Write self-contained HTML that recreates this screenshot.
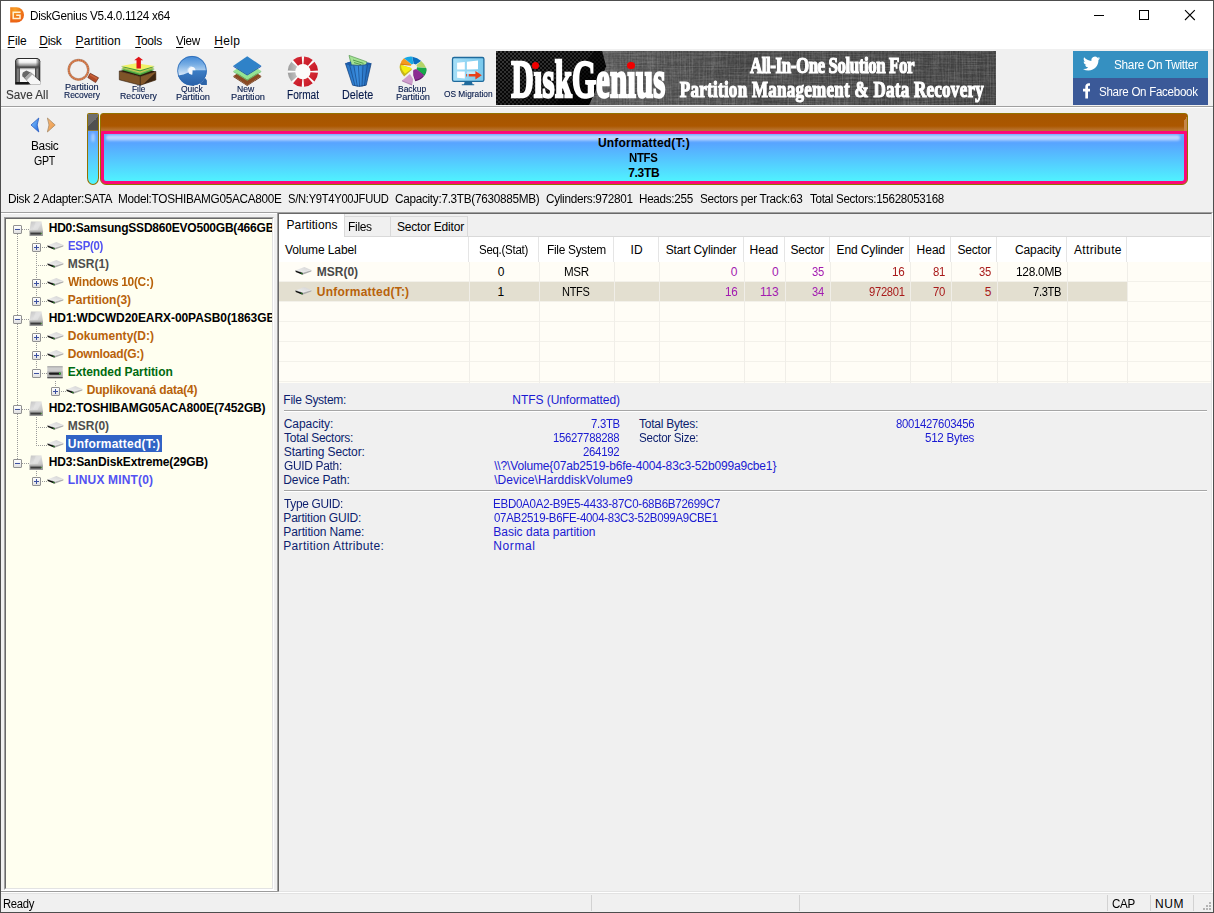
<!DOCTYPE html>
<html lang="en"><head><meta charset="utf-8"><title>DiskGenius V5.4.0.1124 x64</title>
<style>
html,body{margin:0;padding:0}
body{width:1214px;height:913px;overflow:hidden;background:#f0f0f0;font-family:'Liberation Sans', sans-serif;font-size:12px;position:relative}
#win{position:absolute;left:0;top:0;width:1214px;height:913px;overflow:hidden}
#win div,#win span,#win svg{position:absolute;box-sizing:border-box}
#win span{white-space:pre}
.u{text-decoration:underline;text-underline-offset:1px}
#win .nd{position:static;display:inline-block;font-weight:inherit;clip-path:inset(13px -4px 0 -4px)}
#win u{text-decoration:underline;text-underline-offset:1.5px;text-decoration-thickness:1px}

</style></head><body><div id="win">
<div style="left:0px;top:0px;width:1214px;height:913px;background:#f0f0f0;"></div>
<div style="left:1px;top:1px;width:1212px;height:48px;background:#ffffff;"></div>
<svg style="left:9px;top:6px" width="17" height="18" viewBox="9 6 17 18">
<defs><radialGradient id="og" cx=".35" cy=".2" r=".9"><stop offset="0" stop-color="#f8a428"/><stop offset=".5" stop-color="#f07a18"/><stop offset="1" stop-color="#ea5a14"/></radialGradient></defs>
<path d="M10.2 7.2 H16.6 A7.4 7.7 0 0 1 16.6 22.6 H10.2 Z" fill="url(#og)"/>
<path d="M20.6 12.2 H13.2 V18.4 H20 V15.3 H16.2" fill="none" stroke="#fff2d4" stroke-width="1.5"/>
</svg>
<span style="left:29.54px;top:8.00px;font-size:12px;line-height:16px;color:#000;letter-spacing:-0.300px;transform-origin:0 12.0px;transform:scale(0.9764,1);">DiskGenius V5.4.0.1124 x64</span>
<div style="left:1094px;top:15px;width:10px;height:1px;background:#000;"></div>
<div style="left:1139px;top:10px;width:10px;height:10px;border:1px solid #000"></div>
<svg style="left:1184px;top:9px" width="12" height="12" viewBox="0 0 12 12"><path d="M1 1.2 L10.8 11 M10.8 1.2 L1 11" stroke="#000" stroke-width="1.1" fill="none"/></svg>
<span style="left:7.62px;top:33.00px;font-size:12px;line-height:16px;color:#000;letter-spacing:-0.073px;"><u>F</u>ile</span>
<span style="left:39.22px;top:33.00px;font-size:12px;line-height:16px;color:#000;letter-spacing:-0.255px;"><u>D</u>isk</span>
<span style="left:75.62px;top:33.00px;font-size:12px;line-height:16px;color:#000;letter-spacing:0.143px;"><u>P</u>artition</span>
<span style="left:135.23px;top:33.00px;font-size:12px;line-height:16px;color:#000;letter-spacing:-0.278px;"><u>T</u>ools</span>
<span style="left:175.95px;top:33.00px;font-size:12px;line-height:16px;color:#000;letter-spacing:-0.300px;transform-origin:0 12.0px;transform:scale(0.9731,1);"><u>V</u>iew</span>
<span style="left:214.22px;top:33.00px;font-size:12px;line-height:16px;color:#000;letter-spacing:0.370px;"><u>H</u>elp</span>
<div style="left:1px;top:106px;width:1212px;height:1px;background:#a0a0a0;"></div>
<div style="left:1px;top:107px;width:1212px;height:1px;background:#ffffff;"></div>
<div style="left:496px;top:51px;width:500px;height:54px;background:#4b4b4b;overflow:hidden">
<svg style="left:0;top:0" width="500" height="54">
<defs>
<filter id="linH" x="0" y="0" width="100%" height="100%"><feTurbulence type="fractalNoise" baseFrequency="0.03 0.9" numOctaves="2" seed="3"/><feColorMatrix type="matrix" values="0 0 0 0 1  0 0 0 0 1  0 0 0 0 1  0.9 0 0 0 -0.33"/></filter>
<filter id="linV" x="0" y="0" width="100%" height="100%"><feTurbulence type="fractalNoise" baseFrequency="0.9 0.03" numOctaves="2" seed="8"/><feColorMatrix type="matrix" values="0 0 0 0 1  0 0 0 0 1  0 0 0 0 1  0.9 0 0 0 -0.33"/></filter>
<filter id="linD" x="0" y="0" width="100%" height="100%"><feTurbulence type="fractalNoise" baseFrequency="0.5 0.5" numOctaves="1" seed="5"/><feColorMatrix type="matrix" values="0 0 0 0 0  0 0 0 0 0  0 0 0 0 0  0.9 0 0 0 -0.35"/></filter>
<linearGradient id="bnG" x1="0" y1="0" x2="1" y2="0"><stop offset="0.18" stop-color="#585858"/><stop offset="0.5" stop-color="#484848"/><stop offset="1" stop-color="#424242"/></linearGradient>
<pattern id="chk" width="4" height="4" patternUnits="userSpaceOnUse"><rect width="4" height="4" fill="#0a0a0a"/><rect width="2" height="2" fill="#3a3a3a"/><rect x="2" y="2" width="2" height="2" fill="#3a3a3a"/></pattern>
<linearGradient id="chF" x1="0" y1="0" x2="1" y2="1"><stop offset="0" stop-color="#000" stop-opacity="0"/><stop offset="0.55" stop-color="#000" stop-opacity=".35"/><stop offset="1" stop-color="#000" stop-opacity="1"/></linearGradient>
</defs>
<rect width="500" height="54" fill="url(#bnG)"/>
<rect width="500" height="54" filter="url(#linH)" opacity=".36"/>
<rect width="500" height="54" filter="url(#linV)" opacity=".36"/>
<rect width="500" height="54" filter="url(#linD)" opacity=".4"/>
<path d="M0 0 H106 L110 15.5 L93 54 H0 Z" fill="url(#chk)"/>
<path d="M0 0 H106 L110 15.5 L93 54 H0 Z" fill="url(#chF)"/>
<path d="M60 54 L93 54 L110 15.5 L106 0 L98 0 Z" fill="#000" opacity=".55"/>
</svg>
</div>
<span style="left:511.36px;top:69.00px;font-size:31px;line-height:35px;color:#fff;font-weight:700;letter-spacing:0.063px;font-family:'Liberation Serif', serif;transform-origin:0 28.0px;transform:scale(1.0000,1.72);-webkit-text-stroke:1.5px #fff;">D<b class="nd">i</b>skGen<b class="nd">i</b>us</span>
<div style="left:531.5px;top:61.8px;width:7.6px;height:7.6px;border-radius:50%;background:#f00000"></div>
<div style="left:627px;top:61.8px;width:7.6px;height:7.6px;border-radius:50%;background:#f00000"></div>
<span style="left:749.83px;top:57.00px;font-size:17px;line-height:21px;color:#fff;font-weight:700;letter-spacing:-0.425px;font-family:'Liberation Serif', serif;transform-origin:0 16.0px;transform:scale(0.9948,1.3);-webkit-text-stroke:0.95px #fff;">All-In-One Solution For</span>
<span style="left:679.81px;top:81.20px;font-size:17px;line-height:21px;color:#fff;font-weight:700;letter-spacing:0.268px;font-family:'Liberation Serif', serif;transform-origin:0 16.0px;transform:scale(1.0000,1.3);-webkit-text-stroke:0.95px #fff;">Partition Management &amp; Data Recovery</span>
<div style="left:1073px;top:51px;width:135px;height:27px;background:#3590c1;"></div>
<div style="left:1073px;top:78px;width:135px;height:27px;background:#3b5998;"></div>
<svg style="left:1083px;top:55.2px" width="17.2" height="17.2" viewBox="0 0 24 24"><path fill="#fff" d="M23.953 4.57a10 10 0 01-2.825.775 4.958 4.958 0 002.163-2.723c-.951.555-2.005.959-3.127 1.184a4.92 4.92 0 00-8.384 4.482C7.69 8.095 4.067 6.13 1.64 3.162a4.822 4.822 0 00-.666 2.475c0 1.71.87 3.213 2.188 4.096a4.904 4.904 0 01-2.228-.616v.06a4.923 4.923 0 003.946 4.827 4.996 4.996 0 01-2.212.085 4.936 4.936 0 004.604 3.417 9.867 9.867 0 01-6.102 2.105c-.39 0-.779-.023-1.17-.067a13.995 13.995 0 007.557 2.209c9.053 0 13.998-7.496 13.998-13.985 0-.21 0-.42-.015-.63A9.935 9.935 0 0024 4.59z"/></svg>
<svg style="left:1082.8px;top:83.2px" width="7.7" height="15.5" viewBox="0 0 10 20"><path fill="#fff" d="M6.5 20 V11 H9.5 L10 7.5 H6.5 V5.3 C6.5 4.3 6.8 3.6 8.3 3.6 H10 V0.4 C9.7 0.4 8.6 0.3 7.4 0.3 4.8 0.3 3 1.9 3 4.8 V7.5 H0 V11 H3 V20 Z"/></svg>
<span style="left:1113.96px;top:57.00px;font-size:12px;line-height:16px;color:#fff;letter-spacing:-0.300px;transform-origin:0 12.0px;transform:scale(0.9848,1);">Share On Twitter</span>
<span style="left:1098.97px;top:84.00px;font-size:12px;line-height:16px;color:#fff;letter-spacing:-0.300px;transform-origin:0 12.0px;transform:scale(0.9650,1);">Share On Facebook</span>
<svg style="left:0;top:50px" width="496" height="56" viewBox="0 50 496 56">
<defs>
<linearGradient id="svA" x1="0" y1="0" x2="1" y2="0"><stop offset="0" stop-color="#3a3a3a"/><stop offset=".5" stop-color="#8e8e8e"/><stop offset="1" stop-color="#3c3c3c"/></linearGradient>
<linearGradient id="svS" x1="0" y1="0" x2="1" y2="0"><stop offset="0" stop-color="#333" stop-opacity=".75"/><stop offset=".16" stop-color="#333" stop-opacity="0"/><stop offset=".84" stop-color="#333" stop-opacity="0"/><stop offset="1" stop-color="#333" stop-opacity=".75"/></linearGradient><linearGradient id="svT" x1="0" y1="0" x2="0" y2="1"><stop offset="0" stop-color="#ffffff"/><stop offset=".4" stop-color="#f2f2f2"/><stop offset=".8" stop-color="#8e8e8e"/><stop offset="1" stop-color="#5a5a5a"/></linearGradient>
<linearGradient id="fmR" x1="0" y1="0" x2="1" y2="1"><stop offset="0" stop-color="#d8303a"/><stop offset="1" stop-color="#c41422"/></linearGradient>
<linearGradient id="fmG" x1="0" y1="0" x2="1" y2="0"><stop offset="0" stop-color="#9c9c9c"/><stop offset="1" stop-color="#c4c4c4"/></linearGradient>
<linearGradient id="qpA" x1="0" y1="0" x2="0" y2="1"><stop offset="0" stop-color="#4a94dc"/><stop offset=".5" stop-color="#b4d8f4"/><stop offset=".5" stop-color="#3a7cc4"/><stop offset="1" stop-color="#2a62a8"/></linearGradient>
<linearGradient id="qpL" x1="0" y1="0" x2="0" y2="1"><stop offset="0.03" stop-color="#4088d6"/><stop offset=".3" stop-color="#78aee4"/><stop offset=".62" stop-color="#d4e6f8"/><stop offset="1" stop-color="#d4e6f8"/></linearGradient>
<linearGradient id="qpD" x1="0" y1="0" x2="0" y2="1"><stop offset="0" stop-color="#3c7ec6"/><stop offset="1" stop-color="#285ea4"/></linearGradient>
<linearGradient id="binG" x1="0" y1="0" x2="1" y2="0"><stop offset="0" stop-color="#2470c0"/><stop offset=".5" stop-color="#3a8ee0"/><stop offset="1" stop-color="#1e62b0"/></linearGradient>
<linearGradient id="monG" x1="0" y1="0" x2="1" y2="0"><stop offset="0" stop-color="#a8e0f8"/><stop offset="1" stop-color="#78c8ec"/></linearGradient>
<clipPath id="qpC"><circle cx="192" cy="70.75" r="14.8"/></clipPath>
</defs>
<!-- Save All -->
<path d="M18 57.9 H37.4 Q40.3 58.7 40.3 61.2 V84.6 H15.1 V61.2 Q15.1 58.7 18 57.9Z" fill="#2c2c2c"/>
<path d="M18 58.9 H37.4 Q39.4 59.5 39.4 61.2 V67.4 H16 V61.2 Q16 59.5 18 58.9Z" fill="url(#svT)"/>
<path d="M18 58.9 H37.4 Q39.4 59.5 39.4 61.2 V67.4 H16 V61.2 Q16 59.5 18 58.9Z" fill="url(#svS)"/>
<rect x="16" y="67.4" width="3.9" height="15.6" fill="url(#svA)"/>
<rect x="35" y="67.4" width="4.4" height="14.6" fill="url(#svA)"/>
<rect x="16.6" y="66.4" width="22.2" height="2.2" fill="#4c4c4c" opacity=".8"/>
<rect x="19.9" y="68.6" width="15.1" height="13.4" fill="#f7f7f7"/>
<rect x="19.9" y="68.6" width="15.1" height="1.1" fill="#d6d6d6"/>
<rect x="15.6" y="82" width="13" height="2.3" fill="#161616"/>
<path d="M22.2 74.8 L22.8 72.6 L26.4 70.4 L30.6 72.4 L24.8 78.2 L22.4 76.6 Z" fill="#6a6a6a"/>
<path d="M24.8 78.2 L30.6 72.4 L32.6 74.4 L27 80.2 Z" fill="#aeaeae"/>
<path d="M27 80.2 L32.6 74.4 L40.3 81.4 V84.6 H30.6 Z" fill="#f6f6f6"/>
<path d="M30.6 72.4 L40.3 81.2 M24.8 78.2 L30.2 84.6" stroke="#2a2a2a" stroke-width=".6" stroke-dasharray="1.2 .5" fill="none"/>
<!-- Partition Recovery magnifier -->
<circle cx="78.5" cy="69.8" r="9.75" fill="none" stroke="#6a3a20" stroke-width="2.5" opacity=".45"/>
<circle cx="78.5" cy="69.8" r="9.75" fill="none" stroke="#dc8050" stroke-width="1.7"/>
<circle cx="78.5" cy="69.8" r="9.75" fill="none" stroke="#a4562e" stroke-width="1.7" stroke-dasharray=".8 1.4" opacity=".6"/>
<path d="M90.2 73.2 L98.6 77.8 L95.6 82.6 L87.8 77.6 Z" fill="#b04a26" stroke="#5a1e0c" stroke-width=".6" stroke-linejoin="round"/>
<path d="M90.4 74 L97.6 78 L96.8 79.4 L89.6 75.2 Z" fill="#c8623a"/>
<!-- File Recovery -->
<path d="M119.3 71 L140.4 76.4 L140.4 85.2 L119.3 79.8 Z" fill="#7e5428" stroke="#2e1a08" stroke-width=".6" stroke-linejoin="round"/>
<path d="M140.4 76.4 L155.8 71.4 L155.8 80 L140.4 85.2 Z" fill="#84582a" stroke="#2e1a08" stroke-width=".6" stroke-linejoin="round"/>
<path d="M143.5 84 L155.6 72.6 L155.6 79.8 Z" fill="#3c2612"/>
<path d="M119.3 71 L135 67 L155.8 71.4 L140.4 76.4 Z" fill="#2e1a08"/>
<path d="M121 69.8 L136 66.6 L154.6 69.8 L140 75.2 Z" fill="#44a23e"/>
<path d="M121 68.6 L136 65.6 L154.6 68.6 L140 73.8 Z" fill="#8cc458"/>
<path d="M121.6 67.6 L136 64.8 L154 67.6 L140 72.4 Z" fill="#d6c850"/>
<path d="M121 66.8 L136 64 L154.6 66.8 L140 71.4 Z" fill="#3f9a3c"/>
<path d="M121 66 L136 63.2 L154.6 66 L140 70.2 Z" fill="#f2f268"/>
<path d="M136.5 68.4 V60.2 H134.2 L138.7 56.8 L143.2 60.2 H140.9 V68.4 Z" fill="#e01418"/>
<!-- Quick Partition -->
<path d="M199 80 L204.8 77.6 L206.9 80.6 L206.9 85 L201.6 85 L198 82 Z" fill="#2c64a8"/>
<g clip-path="url(#qpC)">
<rect x="176" y="55" width="33" height="32" fill="url(#qpL)"/>
<path d="M176 76 Q184 74.6 188.4 72.4 L192.4 72.4 L192.4 70.3 L208 70.3 L209 87 L176 87 Z" fill="url(#qpD)"/>
</g>
<circle cx="192" cy="70.75" r="14.4" fill="none" stroke="#2a66b2" stroke-width=".9" opacity=".85"/>
<path d="M191.7 66.8 A3.9 3.9 0 1 0 192.4 74.6 L192.4 70.3 L195.5 70.3 A3.9 3.9 0 0 0 191.7 66.8Z" fill="#f6f9fc"/>
<path d="M191.7 66.4 A4.3 4.3 0 0 0 187.6 72" fill="none" stroke="#cfe2f6" stroke-width=".8" opacity=".8"/>
<!-- New Partition -->
<path d="M233.4 76 L247.2 67 L261.2 76 L247.2 85.2 Z" fill="#8a4a22"/>
<path d="M233.4 76 L247.2 85.2 L261.2 76 L261.2 77 L247.2 86 L233.4 77Z" fill="#6c3410"/>
<path d="M233.4 71 L247.2 62 L261.2 71 L247.2 79.8 Z" fill="#94e494"/>
<path d="M233.4 71 L247.2 79.8 L261.2 71 L261.2 72 L247.2 80.8 L233.4 72Z" fill="#6cc070"/>
<path d="M233.4 65.8 L247.2 56.2 L261.2 65.8 L247.2 74.4 Z" fill="#2f82c8"/>
<path d="M233.4 65.8 L247.2 74.4 L261.2 65.8 L261.2 66.8 L247.2 75.4 L233.4 66.8Z" fill="#1a56b0"/>
<!-- Format -->
<circle cx="302.9" cy="71.6" r="14.6" fill="#fbfbfb"/>
<path d="M318.05 72.79 A15.2 15.2 0 0 1 314.46 81.47 L308.68 76.54 A7.6 7.6 0 0 0 310.48 72.20 Z" fill="url(#fmR)"/><path d="M312.77 83.16 A15.2 15.2 0 0 1 304.09 86.75 L303.50 79.18 A7.6 7.6 0 0 0 307.84 77.38 Z" fill="url(#fmR)"/><path d="M301.71 86.75 A15.2 15.2 0 0 1 293.03 83.16 L297.96 77.38 A7.6 7.6 0 0 0 302.30 79.18 Z" fill="url(#fmR)"/><path d="M291.34 81.47 A15.2 15.2 0 0 1 287.75 72.79 L295.32 72.20 A7.6 7.6 0 0 0 297.12 76.54 Z" fill="url(#fmG)"/><path d="M287.75 70.41 A15.2 15.2 0 0 1 291.34 61.73 L297.12 66.66 A7.6 7.6 0 0 0 295.32 71.00 Z" fill="url(#fmG)"/><path d="M293.03 60.04 A15.2 15.2 0 0 1 301.71 56.45 L302.30 64.02 A7.6 7.6 0 0 0 297.96 65.82 Z" fill="url(#fmR)"/><path d="M304.09 56.45 A15.2 15.2 0 0 1 312.77 60.04 L307.84 65.82 A7.6 7.6 0 0 0 303.50 64.02 Z" fill="url(#fmR)"/><path d="M314.46 61.73 A15.2 15.2 0 0 1 318.05 70.41 L310.48 71.00 A7.6 7.6 0 0 0 308.68 66.66 Z" fill="url(#fmR)"/>
<!-- Delete -->
<path d="M349 55.4 L366.8 61.8 L366.2 66.4 L351.6 66 Z" fill="#a4e294" stroke="#3e8a3a" stroke-width=".6"/>
<path d="M353 60 L363.5 63.4 M354 62.6 L361 64.6" stroke="#3e8a3a" stroke-width=".8" fill="none"/>
<path d="M345.4 63.4 Q358 67.4 371.2 63.4 L366.2 85.2 Q359.4 87.6 352.6 85.2 Z" fill="url(#binG)" stroke="#123e78" stroke-width=".7"/>
<path d="M349.6 65 L355 86 M353.8 65.6 L357.4 86.6 M358.4 66 L359.6 86.8 M363 65.6 L362 86.4 M367.4 64.8 L364.4 86" stroke="#123e78" stroke-width=".7" fill="none" opacity=".85"/>
<path d="M345.4 63.4 Q347 61.8 351 61.4 L351.6 66 Q348 65 345.4 63.4Z M366.6 62.2 Q370 62.4 371.2 63.4 Q369 64.6 366.2 65.4Z" fill="#1c5aa8"/>
<!-- Backup Partition -->

<path d="M400 64.6 Q398.2 70 404.1 76.6 L411.6 70 L411.6 68.2 Z" fill="#c4b41c"/>
<path d="M413.4 70.6 L424.1 76 Q420.5 80.4 415.3 81.2 Q412.6 76 413.4 70.6 Z" fill="#5e1a66"/>
<path d="M416.6 69 L426.4 68.6 Q427 72.6 424.1 76 Z" fill="#0e7a32"/>
<path d="M411.5 65.6 L400.2 64.8 Q401 60.5 404 58.3 L411.6 64.4 Z" fill="#f59a1e"/>
<path d="M411.5 65.6 L400.2 64.8 L400.6 63.4 L411 64.9Z" fill="#d87e10"/>
<path d="M411.8 64.4 L404 58.3 Q408 56.2 412.4 56.7 L413.3 63.8 Z" fill="#18a8e4"/>
<path d="M413.6 63.8 L412.4 56.7 Q417.5 57.4 421.2 61 L415.8 64.6 Z" fill="#0a6ec0"/>
<path d="M416.3 65.2 L421.2 61 Q424.8 64 426.2 68 L417 66.8 Z" fill="#b4d468"/>
<path d="M417 67.2 L426.2 68 Q426.8 71.8 424.1 75 L416.6 69 Z" fill="#18a84a"/>
<path d="M413.4 70 L416.2 68.9 L424.1 75 Q420.5 79.2 415.3 79.8 Q412.8 75 413.4 70 Z" fill="#8c2c92"/>
<path d="M411.6 68 L401.2 65 Q400.4 68.8 405 73.8 L411.5 69 Z" fill="#f6ee10"/>
<path d="M402.2 81.4 L412 85.5 L412.8 79 L402.2 80 Z" fill="#b084b0"/>
<path d="M409.9 73.9 L402.2 80.6 L411.9 84.3 L412.8 78.4 Z" fill="#cf9ccc"/>
<ellipse cx="413.7" cy="66.7" rx="2.9" ry="2.2" fill="#f4f2e6"/>

<!-- OS Migration -->
<rect x="452.5" y="57.5" width="31.4" height="23.9" rx="1.6" fill="url(#monG)" stroke="#1f6a9c" stroke-width="1.3"/>
<path d="M464.6 82 H472 L472.6 84.2 H474.2 V85.3 H461.8 V84.2 H464 Z" fill="#1f6a9c"/>
<path d="M457.1 62.8 L464.8 62 V69.4 L457.1 69.6 Z M466.9 61.8 L478 60.6 V69.2 L466.9 69.4 Z M457.1 71.4 L464.8 71.4 V78.6 L457.1 77.8 Z" fill="#ffffff"/>
<path d="M466.9 71.4 L478 71.4 V74 L466.9 74 Z" fill="#ffffff" opacity=".5"/>
<path d="M468.8 73.9 H475.4 V71 L481.8 75.2 L475.4 79.4 V76.5 H468.8 Z M466 73.9 H466.8 V76.5 H466 Z" fill="#e8401a"/>
</svg>
<span style="left:6.27px;top:86.90px;font-size:12px;line-height:16px;color:#383838;transform-origin:0 12.0px;transform:scale(0.9748,1);-webkit-text-stroke:0.12px #383838;">Save All</span>
<span style="left:65.15px;top:81.30px;font-size:8.8px;line-height:12.8px;color:#071a4a;transform-origin:0 9.4px;transform:scale(1.0427,1);-webkit-text-stroke:0.12px #071a4a;">Partition</span>
<span style="left:64.40px;top:89.40px;font-size:8.8px;line-height:12.8px;color:#071a4a;transform-origin:0 9.4px;transform:scale(0.9666,1);-webkit-text-stroke:0.12px #071a4a;">Recovery</span>
<span style="left:131.92px;top:83.40px;font-size:8.8px;line-height:12.8px;color:#071a4a;transform-origin:0 9.4px;transform:scale(0.9417,1);-webkit-text-stroke:0.12px #071a4a;">File</span>
<span style="left:119.98px;top:89.50px;font-size:8.8px;line-height:12.8px;color:#071a4a;transform-origin:0 9.4px;transform:scale(0.9941,1);-webkit-text-stroke:0.12px #071a4a;">Recovery</span>
<span style="left:181.20px;top:83.20px;font-size:8.8px;line-height:12.8px;color:#071a4a;transform-origin:0 9.4px;transform:scale(0.9646,1);-webkit-text-stroke:0.12px #071a4a;">Quick</span>
<span style="left:175.84px;top:91.10px;font-size:8.8px;line-height:12.8px;color:#071a4a;transform-origin:0 9.4px;transform:scale(1.0524,1);-webkit-text-stroke:0.12px #071a4a;">Partition</span>
<span style="left:237.00px;top:83.20px;font-size:8.8px;line-height:12.8px;color:#071a4a;transform-origin:0 9.4px;transform:scale(0.9765,1);-webkit-text-stroke:0.12px #071a4a;">New</span>
<span style="left:231.04px;top:91.10px;font-size:8.8px;line-height:12.8px;color:#071a4a;transform-origin:0 9.4px;transform:scale(1.0524,1);-webkit-text-stroke:0.12px #071a4a;">Partition</span>
<span style="left:286.97px;top:86.70px;font-size:12px;line-height:16px;color:#071a4a;transform-origin:0 12.0px;transform:scale(0.8421,1);-webkit-text-stroke:0.12px #071a4a;">Format</span>
<span style="left:342.21px;top:86.70px;font-size:12px;line-height:16px;color:#071a4a;transform-origin:0 12.0px;transform:scale(0.9014,1);-webkit-text-stroke:0.12px #071a4a;">Delete</span>
<span style="left:398.30px;top:83.20px;font-size:8.8px;line-height:12.8px;color:#071a4a;transform-origin:0 9.4px;transform:scale(0.9628,1);-webkit-text-stroke:0.12px #071a4a;">Backup</span>
<span style="left:395.84px;top:91.10px;font-size:8.8px;line-height:12.8px;color:#071a4a;transform-origin:0 9.4px;transform:scale(1.0524,1);-webkit-text-stroke:0.12px #071a4a;">Partition</span>
<span style="left:444.21px;top:87.80px;font-size:8.8px;line-height:12.8px;color:#071a4a;transform-origin:0 9.4px;transform:scale(0.9475,1);-webkit-text-stroke:0.12px #071a4a;">OS Migration</span>
<svg style="left:28px;top:115px" width="30" height="20" viewBox="28 115 30 20">
<defs><linearGradient id="arB" x1="0" y1="0" x2="1" y2="1"><stop offset="0" stop-color="#8cd0ff"/><stop offset="1" stop-color="#1f66e0"/></linearGradient>
<linearGradient id="arO" x1="0" y1="0" x2="1" y2="1"><stop offset="0" stop-color="#f8b878"/><stop offset="1" stop-color="#e89848"/></linearGradient></defs>
<path d="M31 125 L38.8 118 L37.2 125 L38.8 132 Z" fill="url(#arB)" stroke="#2a5cc0" stroke-width=".8" stroke-linejoin="round"/>
<path d="M55.2 125 L47.4 118 L49 125 L47.4 132 Z" fill="url(#arO)" stroke="#a88c68" stroke-width=".8" stroke-linejoin="round"/>
</svg>
<span style="left:30.53px;top:138.00px;font-size:12px;line-height:16px;color:#000;letter-spacing:-0.300px;transform-origin:0 12.0px;transform:scale(0.9872,1);">Basic</span>
<span style="left:33.97px;top:152.50px;font-size:12px;line-height:16px;color:#000;letter-spacing:-0.300px;transform-origin:0 12.0px;transform:scale(0.8840,1);">GPT</span>
<div style="left:87px;top:113px;width:12px;height:72px;border:1px solid #927200;border-radius:2px 2px 6px 6px / 2px 2px 7px 7px;background:linear-gradient(#6a9cff 0,#62a4ff 30%,#50f4ff 100%);overflow:hidden">
<div style="left:0;top:0;width:10px;height:17px;background:linear-gradient(135deg,#6e6e6e 0 50%,#505050 50% 100%);border-bottom:1px solid #8a7a40"></div>
<div style="left:3px;top:19px;width:4px;height:9px;border-radius:50%;background:rgba(255,255,255,.4);filter:blur(1px)"></div>
</div>
<div style="left:100px;top:113px;width:1088px;height:72px;border:1px solid #927200;border-radius:3px 3px 6px 6px;background:linear-gradient(#a65600 0,#ab5700 12px,#b8722e 16px,#b8722e 100%)"></div>
<div style="left:1184px;top:114px;width:3px;height:17px;background:linear-gradient(135deg,#a85800 0 30%,#c4864a 30% 100%)"></div>
<div style="left:101px;top:131px;width:1086px;height:53px;border:3px solid #fb0878;border-radius:1px 1px 5px 5px;background:linear-gradient(#6aa6ff 0,#58a4ff 9px,#50f2ff 100%)">
<div style="left:2px;top:1px;width:1074px;height:6px;border-radius:3px;background:linear-gradient(rgba(255,255,255,.45),rgba(255,255,255,.62),rgba(255,255,255,.25));filter:blur(.8px)"></div>
</div>
<span style="left:597.98px;top:134.70px;font-size:12px;line-height:16px;color:#000;font-weight:700;letter-spacing:0.178px;">Unformatted(T:)</span>
<span style="left:628.74px;top:149.70px;font-size:12px;line-height:16px;color:#000;font-weight:700;letter-spacing:-0.300px;transform-origin:0 12.0px;transform:scale(0.9465,1);">NTFS</span>
<span style="left:628.18px;top:164.90px;font-size:12px;line-height:16px;color:#000;font-weight:700;letter-spacing:-0.279px;">7.3TB</span>
<span style="left:7.63px;top:190.50px;font-size:12px;line-height:16px;color:#000;letter-spacing:-0.300px;transform-origin:0 12.0px;transform:scale(0.9896,1);">Disk 2 Adapter:SATA</span>
<span style="left:118.33px;top:190.50px;font-size:12px;line-height:16px;color:#000;letter-spacing:-0.300px;transform-origin:0 12.0px;transform:scale(0.9815,1);">Model:TOSHIBAMG05ACA800E</span>
<span style="left:287.79px;top:190.50px;font-size:12px;line-height:16px;color:#000;letter-spacing:-0.300px;transform-origin:0 12.0px;transform:scale(0.9320,1);">S/N:Y9T4Y00JFUUD</span>
<span style="left:395.20px;top:190.50px;font-size:12px;line-height:16px;color:#000;letter-spacing:-0.300px;transform-origin:0 12.0px;transform:scale(0.9802,1);">Capacity:7.3TB(7630885MB)</span>
<span style="left:546.40px;top:190.50px;font-size:12px;line-height:16px;color:#000;letter-spacing:-0.300px;transform-origin:0 12.0px;transform:scale(0.9806,1);">Cylinders:972801</span>
<span style="left:639.34px;top:190.50px;font-size:12px;line-height:16px;color:#000;letter-spacing:-0.300px;transform-origin:0 12.0px;transform:scale(0.9731,1);">Heads:255</span>
<span style="left:700.07px;top:190.50px;font-size:12px;line-height:16px;color:#000;letter-spacing:-0.300px;transform-origin:0 12.0px;transform:scale(0.9783,1);">Sectors per Track:63</span>
<span style="left:809.94px;top:190.50px;font-size:12px;line-height:16px;color:#000;letter-spacing:-0.300px;transform-origin:0 12.0px;transform:scale(0.9666,1);">Total Sectors:15628053168</span>
<div style="left:1px;top:212px;width:1212px;height:1px;background:#a0a0a0;"></div>
<div style="left:1px;top:213px;width:1212px;height:1px;background:#ffffff;"></div>
<div style="left:4px;top:217px;width:270px;height:673px;background:#fffff0;border-top:1px solid #a0a0a0;border-left:1px solid #a0a0a0;border-right:1px solid #fff;border-bottom:1px solid #fff"></div>
<div style="left:5px;top:218px;width:268px;height:671px;background:#fffff0;border-top:1px solid #696969;border-left:1px solid #696969;border-right:1px solid #e3e3e3;border-bottom:1px solid #e3e3e3"></div>
<svg width="0" height="0" style="left:0;top:0"><defs>
<linearGradient id="hdTop" x1="0" y1="0" x2="1" y2="1"><stop offset="0" stop-color="#c4c4c4"/><stop offset="0.5" stop-color="#dedede"/><stop offset="1" stop-color="#c0c0c0"/></linearGradient>
<linearGradient id="ptTop" x1="0" y1="1" x2="1" y2="0"><stop offset="0" stop-color="#f2f2f2"/><stop offset="0.5" stop-color="#e2e2e2"/><stop offset="1" stop-color="#d2d2d2"/></linearGradient>
<symbol id="icHD" viewBox="0 0 15 16"><path d="M2 0.5 H13 L14.5 10 H0.5 Z" fill="url(#hdTop)"/><path d="M7 1 L13 1 L9 9 L4 9 Z" fill="#e6e6e6" opacity=".6"/><rect x="0.5" y="10" width="14" height="5.5" fill="#9a9a9a"/><rect x="0.5" y="10" width="14" height="1" fill="#b8b8b8"/><rect x="1.5" y="12" width="11" height="2" fill="#3c3c3c"/><rect x="12.3" y="12.3" width="1.2" height="1.2" fill="#4a9a3a"/></symbol>
<symbol id="icPT" viewBox="0 0 17 9"><path d="M0.8 3.2 L9.4 0 L16.3 3 L7.7 5.7 Z" fill="url(#ptTop)"/><path d="M7.7 5.6 L16.3 3 L16.3 4.6 L7.5 7.7 Z" fill="#adadad"/><path d="M0.5 3.3 L7.7 5.6 L7.5 7.7 L0.7 4.9 Z" fill="#0c0c0c"/><path d="M5.8 5.6 L7.4 6.1 L7.3 7.3 L5.8 6.7 Z" fill="#1c7a1c"/><path d="M0.6 3.3 L7.7 5.5 L16.3 2.9" fill="none" stroke="#fbfbfb" stroke-width=".5"/></symbol>
<symbol id="icEX" viewBox="0 0 16 13"><rect x="0.3" y="0.3" width="15.4" height="12" rx=".8" fill="#cdcdcd"/><rect x="0.3" y="0.3" width="15.4" height="1" fill="#a2a2a2"/><rect x="0.3" y="5.4" width="15.4" height="6" fill="#b0b0b0"/><rect x="1.8" y="6.4" width="12.2" height="2.3" rx="1.1" fill="#1c1c1c"/><rect x="12" y="6.6" width="1.7" height="1.9" rx=".6" fill="#34c434"/><rect x="0.3" y="11" width="15.4" height="1.3" fill="#555"/></symbol>
</defs></svg>
<div style="left:6px;top:219px;width:266px;height:669px;overflow:hidden">
<div style="left:11px;top:15px;width:1px;height:227px;background:repeating-linear-gradient(#9a9a9a 0 1px,transparent 1px 2px)"></div>
<div style="left:30px;top:18px;width:1px;height:65px;background:repeating-linear-gradient(#9a9a9a 0 1px,transparent 1px 2px)"></div>
<div style="left:30px;top:108px;width:1px;height:47px;background:repeating-linear-gradient(#9a9a9a 0 1px,transparent 1px 2px)"></div>
<div style="left:30px;top:198px;width:1px;height:29px;background:repeating-linear-gradient(#9a9a9a 0 1px,transparent 1px 2px)"></div>
<div style="left:30px;top:252px;width:1px;height:11px;background:repeating-linear-gradient(#9a9a9a 0 1px,transparent 1px 2px)"></div>
<div style="left:49px;top:162px;width:1px;height:11px;background:repeating-linear-gradient(#9a9a9a 0 1px,transparent 1px 2px)"></div>
<div style="left:16px;top:10px;width:7px;height:1px;background:repeating-linear-gradient(90deg,#9a9a9a 0 1px,transparent 1px 2px)"></div>
<div style="left:7px;top:6px;width:9px;height:9px;border:1px solid #919191;background:linear-gradient(#fff,#e0e0e0);border-radius:1px"></div>
<div style="left:9px;top:10px;width:5px;height:1px;background:#3c50a0;"></div>
<svg style="left:23px;top:2px" width="14.4" height="15.6"><use href="#icHD"/></svg>
<span style="left:42.70px;top:1.00px;font-size:12px;line-height:16px;color:#000;font-weight:700;letter-spacing:-0.216px;">HD0:SamsungSSD860EVO500GB(466GB)</span>
<div style="left:30px;top:28px;width:11px;height:1px;background:repeating-linear-gradient(90deg,#9a9a9a 0 1px,transparent 1px 2px)"></div>
<div style="left:26px;top:24px;width:9px;height:9px;border:1px solid #919191;background:linear-gradient(#fff,#e0e0e0);border-radius:1px"></div>
<div style="left:28px;top:28px;width:5px;height:1px;background:#3c50a0;"></div>
<div style="left:30px;top:26px;width:1px;height:5px;background:#3c50a0;"></div>
<svg style="left:40.5px;top:23px" width="17" height="9"><use href="#icPT"/></svg>
<span style="left:61.74px;top:19.00px;font-size:12px;line-height:16px;color:#5252f2;font-weight:700;letter-spacing:-0.300px;transform-origin:0 12.0px;transform:scale(0.9503,1);">ESP(0)</span>
<div style="left:30px;top:46px;width:11px;height:1px;background:repeating-linear-gradient(90deg,#9a9a9a 0 1px,transparent 1px 2px)"></div>
<svg style="left:40.5px;top:41px" width="17" height="9"><use href="#icPT"/></svg>
<span style="left:61.70px;top:37.00px;font-size:12px;line-height:16px;color:#4e4e4e;font-weight:700;letter-spacing:0.014px;">MSR(1)</span>
<div style="left:30px;top:64px;width:11px;height:1px;background:repeating-linear-gradient(90deg,#9a9a9a 0 1px,transparent 1px 2px)"></div>
<div style="left:26px;top:60px;width:9px;height:9px;border:1px solid #919191;background:linear-gradient(#fff,#e0e0e0);border-radius:1px"></div>
<div style="left:28px;top:64px;width:5px;height:1px;background:#3c50a0;"></div>
<div style="left:30px;top:62px;width:1px;height:5px;background:#3c50a0;"></div>
<svg style="left:40.5px;top:59px" width="17" height="9"><use href="#icPT"/></svg>
<span style="left:62.49px;top:55.00px;font-size:12px;line-height:16px;color:#b8620a;font-weight:700;letter-spacing:-0.300px;transform-origin:0 12.0px;transform:scale(0.9956,1);">Windows 10(C:)</span>
<div style="left:30px;top:82px;width:11px;height:1px;background:repeating-linear-gradient(90deg,#9a9a9a 0 1px,transparent 1px 2px)"></div>
<div style="left:26px;top:78px;width:9px;height:9px;border:1px solid #919191;background:linear-gradient(#fff,#e0e0e0);border-radius:1px"></div>
<div style="left:28px;top:82px;width:5px;height:1px;background:#3c50a0;"></div>
<div style="left:30px;top:80px;width:1px;height:5px;background:#3c50a0;"></div>
<svg style="left:40.5px;top:77px" width="17" height="9"><use href="#icPT"/></svg>
<span style="left:61.70px;top:73.00px;font-size:12px;line-height:16px;color:#b8620a;font-weight:700;letter-spacing:0.006px;">Partition(3)</span>
<div style="left:16px;top:100px;width:7px;height:1px;background:repeating-linear-gradient(90deg,#9a9a9a 0 1px,transparent 1px 2px)"></div>
<div style="left:7px;top:96px;width:9px;height:9px;border:1px solid #919191;background:linear-gradient(#fff,#e0e0e0);border-radius:1px"></div>
<div style="left:9px;top:100px;width:5px;height:1px;background:#3c50a0;"></div>
<svg style="left:23px;top:92px" width="14.4" height="15.6"><use href="#icHD"/></svg>
<span style="left:42.70px;top:91.00px;font-size:12px;line-height:16px;color:#000;font-weight:700;letter-spacing:-0.070px;">HD1:WDCWD20EARX-00PASB0(1863GB)</span>
<div style="left:30px;top:118px;width:11px;height:1px;background:repeating-linear-gradient(90deg,#9a9a9a 0 1px,transparent 1px 2px)"></div>
<div style="left:26px;top:114px;width:9px;height:9px;border:1px solid #919191;background:linear-gradient(#fff,#e0e0e0);border-radius:1px"></div>
<div style="left:28px;top:118px;width:5px;height:1px;background:#3c50a0;"></div>
<div style="left:30px;top:116px;width:1px;height:5px;background:#3c50a0;"></div>
<svg style="left:40.5px;top:113px" width="17" height="9"><use href="#icPT"/></svg>
<span style="left:61.70px;top:109.00px;font-size:12px;line-height:16px;color:#b8620a;font-weight:700;letter-spacing:0.034px;">Dokumenty(D:)</span>
<div style="left:30px;top:136px;width:11px;height:1px;background:repeating-linear-gradient(90deg,#9a9a9a 0 1px,transparent 1px 2px)"></div>
<div style="left:26px;top:132px;width:9px;height:9px;border:1px solid #919191;background:linear-gradient(#fff,#e0e0e0);border-radius:1px"></div>
<div style="left:28px;top:136px;width:5px;height:1px;background:#3c50a0;"></div>
<div style="left:30px;top:134px;width:1px;height:5px;background:#3c50a0;"></div>
<svg style="left:40.5px;top:131px" width="17" height="9"><use href="#icPT"/></svg>
<span style="left:61.70px;top:127.00px;font-size:12px;line-height:16px;color:#b8620a;font-weight:700;letter-spacing:-0.205px;">Download(G:)</span>
<div style="left:30px;top:154px;width:11px;height:1px;background:repeating-linear-gradient(90deg,#9a9a9a 0 1px,transparent 1px 2px)"></div>
<div style="left:26px;top:150px;width:9px;height:9px;border:1px solid #919191;background:linear-gradient(#fff,#e0e0e0);border-radius:1px"></div>
<div style="left:28px;top:154px;width:5px;height:1px;background:#3c50a0;"></div>
<svg style="left:41px;top:147px" width="16" height="13"><use href="#icEX"/></svg>
<span style="left:61.70px;top:145.00px;font-size:12px;line-height:16px;color:#006a10;font-weight:700;letter-spacing:-0.057px;">Extended Partition</span>
<div style="left:49px;top:172px;width:11px;height:1px;background:repeating-linear-gradient(90deg,#9a9a9a 0 1px,transparent 1px 2px)"></div>
<div style="left:45px;top:168px;width:9px;height:9px;border:1px solid #919191;background:linear-gradient(#fff,#e0e0e0);border-radius:1px"></div>
<div style="left:47px;top:172px;width:5px;height:1px;background:#3c50a0;"></div>
<div style="left:49px;top:170px;width:1px;height:5px;background:#3c50a0;"></div>
<svg style="left:59.5px;top:167px" width="17" height="9"><use href="#icPT"/></svg>
<span style="left:80.70px;top:163.00px;font-size:12px;line-height:16px;color:#b8620a;font-weight:700;letter-spacing:-0.174px;">Duplikovaná data(4)</span>
<div style="left:16px;top:190px;width:7px;height:1px;background:repeating-linear-gradient(90deg,#9a9a9a 0 1px,transparent 1px 2px)"></div>
<div style="left:7px;top:186px;width:9px;height:9px;border:1px solid #919191;background:linear-gradient(#fff,#e0e0e0);border-radius:1px"></div>
<div style="left:9px;top:190px;width:5px;height:1px;background:#3c50a0;"></div>
<svg style="left:23px;top:182px" width="14.4" height="15.6"><use href="#icHD"/></svg>
<span style="left:42.70px;top:181.00px;font-size:12px;line-height:16px;color:#000;font-weight:700;letter-spacing:-0.147px;">HD2:TOSHIBAMG05ACA800E(7452GB)</span>
<div style="left:30px;top:208px;width:11px;height:1px;background:repeating-linear-gradient(90deg,#9a9a9a 0 1px,transparent 1px 2px)"></div>
<svg style="left:40.5px;top:203px" width="17" height="9"><use href="#icPT"/></svg>
<span style="left:61.70px;top:199.00px;font-size:12px;line-height:16px;color:#4e4e4e;font-weight:700;letter-spacing:0.014px;">MSR(0)</span>
<div style="left:30px;top:226px;width:11px;height:1px;background:repeating-linear-gradient(90deg,#9a9a9a 0 1px,transparent 1px 2px)"></div>
<svg style="left:40.5px;top:221px" width="17" height="9"><use href="#icPT"/></svg>
<div style="left:60px;top:216px;width:96px;height:17px;background:#3163c5;"></div>
<span style="left:61.78px;top:217.00px;font-size:12px;line-height:16px;color:#fff;font-weight:700;letter-spacing:0.214px;">Unformatted(T:)</span>
<div style="left:16px;top:244px;width:7px;height:1px;background:repeating-linear-gradient(90deg,#9a9a9a 0 1px,transparent 1px 2px)"></div>
<div style="left:7px;top:240px;width:9px;height:9px;border:1px solid #919191;background:linear-gradient(#fff,#e0e0e0);border-radius:1px"></div>
<div style="left:9px;top:244px;width:5px;height:1px;background:#3c50a0;"></div>
<svg style="left:23px;top:236px" width="14.4" height="15.6"><use href="#icHD"/></svg>
<span style="left:42.70px;top:235.00px;font-size:12px;line-height:16px;color:#000;font-weight:700;letter-spacing:-0.116px;">HD3:SanDiskExtreme(29GB)</span>
<div style="left:30px;top:262px;width:11px;height:1px;background:repeating-linear-gradient(90deg,#9a9a9a 0 1px,transparent 1px 2px)"></div>
<div style="left:26px;top:258px;width:9px;height:9px;border:1px solid #919191;background:linear-gradient(#fff,#e0e0e0);border-radius:1px"></div>
<div style="left:28px;top:262px;width:5px;height:1px;background:#3c50a0;"></div>
<div style="left:30px;top:260px;width:1px;height:5px;background:#3c50a0;"></div>
<svg style="left:40.5px;top:257px" width="17" height="9"><use href="#icPT"/></svg>
<span style="left:61.70px;top:253.00px;font-size:12px;line-height:16px;color:#5252f2;font-weight:700;letter-spacing:0.173px;">LINUX MINT(0)</span>
</div>
<div style="left:277px;top:212px;width:936px;height:681px;background:#f0f0f0;border-top:1px solid #a0a0a0;border-left:1px solid #a0a0a0;border-right:1px solid #fff;border-bottom:1px solid #fff"></div>
<div style="left:278px;top:213px;width:934px;height:679px;background:#f0f0f0;border-top:1px solid #696969;border-left:1px solid #696969;border-right:1px solid #e3e3e3;border-bottom:1px solid #e3e3e3"></div>
<div style="left:279px;top:236px;width:931px;height:1px;background:#d9d9d9;"></div>
<div style="left:279px;top:214px;width:66px;height:23px;background:#ffffff;border-right:1px solid #d9d9d9"></div>
<div style="left:345px;top:216px;width:46px;height:21px;background:#f0f0f0;border:1px solid #d9d9d9;border-left:none"></div>
<div style="left:391px;top:216px;width:77px;height:21px;background:#f0f0f0;border:1px solid #d9d9d9;border-left:none"></div>
<span style="left:286.52px;top:217.00px;font-size:12px;line-height:16px;color:#000;letter-spacing:0.100px;">Partitions</span>
<span style="left:348.32px;top:219.00px;font-size:12px;line-height:16px;color:#000;letter-spacing:-0.300px;transform-origin:0 12.0px;transform:scale(0.9992,1);">Files</span>
<span style="left:396.96px;top:219.00px;font-size:12px;line-height:16px;color:#000;letter-spacing:-0.177px;">Sector Editor</span>
<div style="left:279px;top:237px;width:932px;height:25px;background:#ffffff;"></div>
<div style="left:468px;top:237px;width:1px;height:25px;background:#e5e5e5;"></div>
<div style="left:538px;top:237px;width:1px;height:25px;background:#e5e5e5;"></div>
<div style="left:613px;top:237px;width:1px;height:25px;background:#e5e5e5;"></div>
<div style="left:658px;top:237px;width:1px;height:25px;background:#e5e5e5;"></div>
<div style="left:743px;top:237px;width:1px;height:25px;background:#e5e5e5;"></div>
<div style="left:784px;top:237px;width:1px;height:25px;background:#e5e5e5;"></div>
<div style="left:829px;top:237px;width:1px;height:25px;background:#e5e5e5;"></div>
<div style="left:909px;top:237px;width:1px;height:25px;background:#e5e5e5;"></div>
<div style="left:950px;top:237px;width:1px;height:25px;background:#e5e5e5;"></div>
<div style="left:996px;top:237px;width:1px;height:25px;background:#e5e5e5;"></div>
<div style="left:1066px;top:237px;width:1px;height:25px;background:#e5e5e5;"></div>
<div style="left:1126px;top:237px;width:1px;height:25px;background:#e5e5e5;"></div>
<div style="left:279px;top:262px;width:932px;height:121px;background:#fffdf6;"></div>
<div style="left:279px;top:282px;width:848px;height:19px;background:#e3dfd0;"></div>
<div style="left:279px;top:281px;width:932px;height:1px;background:#f3f1ea;"></div>
<div style="left:279px;top:301px;width:932px;height:1px;background:#f3f1ea;"></div>
<div style="left:279px;top:321px;width:932px;height:1px;background:#f3f1ea;"></div>
<div style="left:279px;top:341px;width:932px;height:1px;background:#f3f1ea;"></div>
<div style="left:279px;top:361px;width:932px;height:1px;background:#f3f1ea;"></div>
<div style="left:279px;top:381px;width:932px;height:1px;background:#f3f1ea;"></div>
<div style="left:469px;top:262px;width:1px;height:121px;background:#f0eee8;"></div>
<div style="left:539px;top:262px;width:1px;height:121px;background:#f0eee8;"></div>
<div style="left:614px;top:262px;width:1px;height:121px;background:#f0eee8;"></div>
<div style="left:659px;top:262px;width:1px;height:121px;background:#f0eee8;"></div>
<div style="left:744px;top:262px;width:1px;height:121px;background:#f0eee8;"></div>
<div style="left:785px;top:262px;width:1px;height:121px;background:#f0eee8;"></div>
<div style="left:830px;top:262px;width:1px;height:121px;background:#f0eee8;"></div>
<div style="left:910px;top:262px;width:1px;height:121px;background:#f0eee8;"></div>
<div style="left:951px;top:262px;width:1px;height:121px;background:#f0eee8;"></div>
<div style="left:997px;top:262px;width:1px;height:121px;background:#f0eee8;"></div>
<div style="left:1067px;top:262px;width:1px;height:121px;background:#f0eee8;"></div>
<div style="left:1127px;top:262px;width:1px;height:121px;background:#f0eee8;"></div>
<span style="left:284.95px;top:242.00px;font-size:12px;line-height:16px;color:#000;letter-spacing:-0.079px;">Volume Label</span>
<span style="left:479.48px;top:242.00px;font-size:12px;line-height:16px;color:#000;letter-spacing:-0.300px;transform-origin:0 12.0px;transform:scale(0.9593,1);">Seq.(Stat)</span>
<span style="left:546.72px;top:242.00px;font-size:12px;line-height:16px;color:#000;letter-spacing:-0.300px;transform-origin:0 12.0px;transform:scale(0.9931,1);">File System</span>
<span style="left:630.59px;top:242.00px;font-size:12px;line-height:16px;color:#000;letter-spacing:-0.018px;">ID</span>
<span style="left:665.76px;top:242.00px;font-size:12px;line-height:16px;color:#000;letter-spacing:-0.150px;">Start Cylinder</span>
<span style="left:749.52px;top:242.00px;font-size:12px;line-height:16px;color:#000;letter-spacing:0.023px;">Head</span>
<span style="left:790.46px;top:242.00px;font-size:12px;line-height:16px;color:#000;letter-spacing:-0.188px;">Sector</span>
<span style="left:836.62px;top:242.00px;font-size:12px;line-height:16px;color:#000;letter-spacing:-0.138px;">End Cylinder</span>
<span style="left:916.52px;top:242.00px;font-size:12px;line-height:16px;color:#000;letter-spacing:0.023px;">Head</span>
<span style="left:957.46px;top:242.00px;font-size:12px;line-height:16px;color:#000;letter-spacing:-0.188px;">Sector</span>
<span style="left:1014.89px;top:242.00px;font-size:12px;line-height:16px;color:#000;letter-spacing:-0.079px;">Capacity</span>
<span style="left:1073.98px;top:242.00px;font-size:12px;line-height:16px;color:#000;letter-spacing:0.358px;">Attribute</span>
<svg style="left:294.5px;top:267px" width="17" height="9"><use href="#icPT"/></svg>
<span style="left:316.70px;top:263.70px;font-size:12px;line-height:16px;color:#484848;font-weight:700;letter-spacing:0.014px;">MSR(0)</span>
<span style="left:497.66px;top:264.00px;font-size:12px;line-height:16px;color:#000;">0</span>
<span style="left:563.50px;top:264.00px;font-size:12px;line-height:16px;color:#000;letter-spacing:-0.300px;transform-origin:0 12.0px;transform:scale(0.9664,1);">MSR</span>
<span style="left:730.79px;top:264.00px;font-size:12px;line-height:16px;color:#a21ab0;">0</span>
<span style="left:771.99px;top:264.00px;font-size:12px;line-height:16px;color:#a21ab0;">0</span>
<span style="left:812.27px;top:264.00px;font-size:12px;line-height:16px;color:#a21ab0;letter-spacing:-0.300px;transform-origin:0 12.0px;transform:scale(0.9349,1);">35</span>
<span style="left:891.81px;top:264.00px;font-size:12px;line-height:16px;color:#a81a1a;letter-spacing:-0.300px;transform-origin:0 12.0px;transform:scale(0.9736,1);">16</span>
<span style="left:933.01px;top:264.00px;font-size:12px;line-height:16px;color:#a81a1a;letter-spacing:-0.300px;transform-origin:0 12.0px;transform:scale(0.9464,1);">81</span>
<span style="left:979.27px;top:264.00px;font-size:12px;line-height:16px;color:#a81a1a;letter-spacing:-0.300px;transform-origin:0 12.0px;transform:scale(0.9349,1);">35</span>
<span style="left:1015.59px;top:264.00px;font-size:12px;line-height:16px;color:#000;letter-spacing:-0.300px;transform-origin:0 12.0px;transform:scale(0.9959,1);">128.0MB</span>
<svg style="left:294.5px;top:287px" width="17" height="9"><use href="#icPT"/></svg>
<span style="left:316.78px;top:283.70px;font-size:12px;line-height:16px;color:#b8620a;font-weight:700;letter-spacing:0.214px;">Unformatted(T:)</span>
<span style="left:497.50px;top:284.00px;font-size:12px;line-height:16px;color:#000;">1</span>
<span style="left:562.15px;top:284.00px;font-size:12px;line-height:16px;color:#000;letter-spacing:-0.300px;transform-origin:0 12.0px;transform:scale(0.9171,1);">NTFS</span>
<span style="left:724.81px;top:284.00px;font-size:12px;line-height:16px;color:#a21ab0;letter-spacing:-0.300px;transform-origin:0 12.0px;transform:scale(0.9736,1);">16</span>
<span style="left:760.09px;top:284.00px;font-size:12px;line-height:16px;color:#a21ab0;letter-spacing:-0.245px;">113</span>
<span style="left:812.28px;top:284.00px;font-size:12px;line-height:16px;color:#a21ab0;letter-spacing:-0.300px;transform-origin:0 12.0px;transform:scale(0.9233,1);">34</span>
<span style="left:868.58px;top:284.00px;font-size:12px;line-height:16px;color:#a81a1a;letter-spacing:-0.300px;transform-origin:0 12.0px;transform:scale(0.9333,1);">972801</span>
<span style="left:932.92px;top:284.00px;font-size:12px;line-height:16px;color:#a81a1a;letter-spacing:-0.300px;transform-origin:0 12.0px;transform:scale(0.9445,1);">70</span>
<span style="left:984.83px;top:284.00px;font-size:12px;line-height:16px;color:#a81a1a;">5</span>
<span style="left:1033.13px;top:284.00px;font-size:12px;line-height:16px;color:#000;letter-spacing:-0.300px;transform-origin:0 12.0px;transform:scale(0.9233,1);">7.3TB</span>
<div style="left:284px;top:410px;width:923px;height:1px;background:#a6a6a6;"></div>
<div style="left:284px;top:411px;width:923px;height:1px;background:#ffffff;"></div>
<div style="left:284px;top:490px;width:923px;height:1px;background:#a6a6a6;"></div>
<div style="left:284px;top:491px;width:923px;height:1px;background:#ffffff;"></div>
<span style="left:283.32px;top:391.50px;font-size:12px;line-height:16px;color:#0c1e6e;letter-spacing:-0.267px;">File System:</span>
<span style="left:512.32px;top:391.50px;font-size:12px;line-height:16px;color:#1a1ad2;letter-spacing:-0.056px;">NTFS (Unformatted)</span>
<span style="left:283.69px;top:415.50px;font-size:12px;line-height:16px;color:#0c1e6e;letter-spacing:-0.040px;">Capacity:</span>
<span style="left:284.03px;top:429.50px;font-size:12px;line-height:16px;color:#0c1e6e;letter-spacing:-0.256px;">Total Sectors:</span>
<span style="left:283.76px;top:443.50px;font-size:12px;line-height:16px;color:#0c1e6e;letter-spacing:-0.104px;">Starting Sector:</span>
<span style="left:283.70px;top:457.50px;font-size:12px;line-height:16px;color:#0c1e6e;letter-spacing:-0.300px;transform-origin:0 12.0px;transform:scale(0.9920,1);">GUID Path:</span>
<span style="left:283.32px;top:471.50px;font-size:12px;line-height:16px;color:#0c1e6e;letter-spacing:-0.132px;">Device Path:</span>
<span style="left:590.62px;top:415.50px;font-size:12px;line-height:16px;color:#1a1ad2;letter-spacing:-0.300px;transform-origin:0 12.0px;transform:scale(0.9470,1);">7.3TB</span>
<span style="left:553.14px;top:429.50px;font-size:12px;line-height:16px;color:#1a1ad2;letter-spacing:-0.300px;transform-origin:0 12.0px;transform:scale(0.9452,1);">15627788288</span>
<span style="left:583.13px;top:443.50px;font-size:12px;line-height:16px;color:#1a1ad2;letter-spacing:-0.300px;transform-origin:0 12.0px;transform:scale(0.9508,1);">264192</span>
<span style="left:494.20px;top:457.50px;font-size:12px;line-height:16px;color:#1a1ad2;letter-spacing:-0.157px;">\\?\Volume{07ab2519-b6fe-4004-83c3-52b099a9cbe1}</span>
<span style="left:494.20px;top:471.50px;font-size:12px;line-height:16px;color:#1a1ad2;letter-spacing:0.053px;">\Device\HarddiskVolume9</span>
<span style="left:639.03px;top:415.50px;font-size:12px;line-height:16px;color:#0c1e6e;letter-spacing:-0.242px;">Total Bytes:</span>
<span style="left:638.77px;top:429.50px;font-size:12px;line-height:16px;color:#0c1e6e;letter-spacing:-0.300px;transform-origin:0 12.0px;transform:scale(0.9707,1);">Sector Size:</span>
<span style="left:896.01px;top:415.50px;font-size:12px;line-height:16px;color:#1a1ad2;letter-spacing:-0.300px;transform-origin:0 12.0px;transform:scale(0.9438,1);">8001427603456</span>
<span style="left:925.03px;top:429.50px;font-size:12px;line-height:16px;color:#1a1ad2;letter-spacing:-0.300px;transform-origin:0 12.0px;transform:scale(0.9690,1);">512 Bytes</span>
<span style="left:284.03px;top:495.50px;font-size:12px;line-height:16px;color:#0c1e6e;letter-spacing:-0.300px;transform-origin:0 12.0px;transform:scale(0.9895,1);">Type GUID:</span>
<span style="left:283.32px;top:509.50px;font-size:12px;line-height:16px;color:#0c1e6e;letter-spacing:-0.186px;">Partition GUID:</span>
<span style="left:283.32px;top:523.50px;font-size:12px;line-height:16px;color:#0c1e6e;letter-spacing:-0.116px;">Partition Name:</span>
<span style="left:283.32px;top:537.50px;font-size:12px;line-height:16px;color:#0c1e6e;letter-spacing:0.300px;">Partition Attribute:</span>
<span style="left:493.25px;top:495.50px;font-size:12px;line-height:16px;color:#1a1ad2;letter-spacing:-0.300px;transform-origin:0 12.0px;transform:scale(0.9655,1);">EBD0A0A2-B9E5-4433-87C0-68B6B72699C7</span>
<span style="left:493.75px;top:509.50px;font-size:12px;line-height:16px;color:#1a1ad2;letter-spacing:-0.300px;transform-origin:0 12.0px;transform:scale(0.9560,1);">07AB2519-B6FE-4004-83C3-52B099A9CBE1</span>
<span style="left:493.22px;top:523.50px;font-size:12px;line-height:16px;color:#1a1ad2;letter-spacing:0.011px;">Basic data partition</span>
<span style="left:493.22px;top:537.50px;font-size:12px;line-height:16px;color:#1a1ad2;letter-spacing:0.623px;">Normal</span>
<div style="left:1px;top:890px;width:276px;height:1px;background:#ffffff;"></div>
<div style="left:1px;top:891px;width:276px;height:1px;background:#9c9c9c;"></div>
<div style="left:1px;top:892px;width:1212px;height:1px;background:#ffffff;"></div>
<div style="left:1px;top:893px;width:1212px;height:1px;background:#e2e2e2;"></div>
<div style="left:591px;top:895px;width:1px;height:16px;background:#d2d2d2;"></div>
<div style="left:799px;top:895px;width:1px;height:16px;background:#d2d2d2;"></div>
<div style="left:1107px;top:895px;width:1px;height:16px;background:#d2d2d2;"></div>
<div style="left:1150px;top:895px;width:1px;height:16px;background:#d2d2d2;"></div>
<div style="left:1193px;top:895px;width:1px;height:16px;background:#d2d2d2;"></div>
<span style="left:3.08px;top:896.00px;font-size:12px;line-height:16px;color:#000;letter-spacing:-0.300px;transform-origin:0 12.0px;transform:scale(0.9390,1);">Ready</span>
<span style="left:1111.91px;top:895.50px;font-size:12px;line-height:16px;color:#000;letter-spacing:-0.300px;transform-origin:0 12.0px;transform:scale(0.9636,1);">CAP</span>
<span style="left:1155.02px;top:895.50px;font-size:12px;line-height:16px;color:#000;letter-spacing:0.570px;">NUM</span>
<div style="left:1209px;top:902px;width:2px;height:2px;background:#b4b4b4;"></div>
<div style="left:1206px;top:905px;width:2px;height:2px;background:#b4b4b4;"></div>
<div style="left:1209px;top:905px;width:2px;height:2px;background:#b4b4b4;"></div>
<div style="left:1203px;top:908px;width:2px;height:2px;background:#b4b4b4;"></div>
<div style="left:1206px;top:908px;width:2px;height:2px;background:#b4b4b4;"></div>
<div style="left:1209px;top:908px;width:2px;height:2px;background:#b4b4b4;"></div>
<div style="left:0;top:0;width:1214px;height:913px;border:1px solid #4d4d4d;pointer-events:none"></div>
</div></body></html>
